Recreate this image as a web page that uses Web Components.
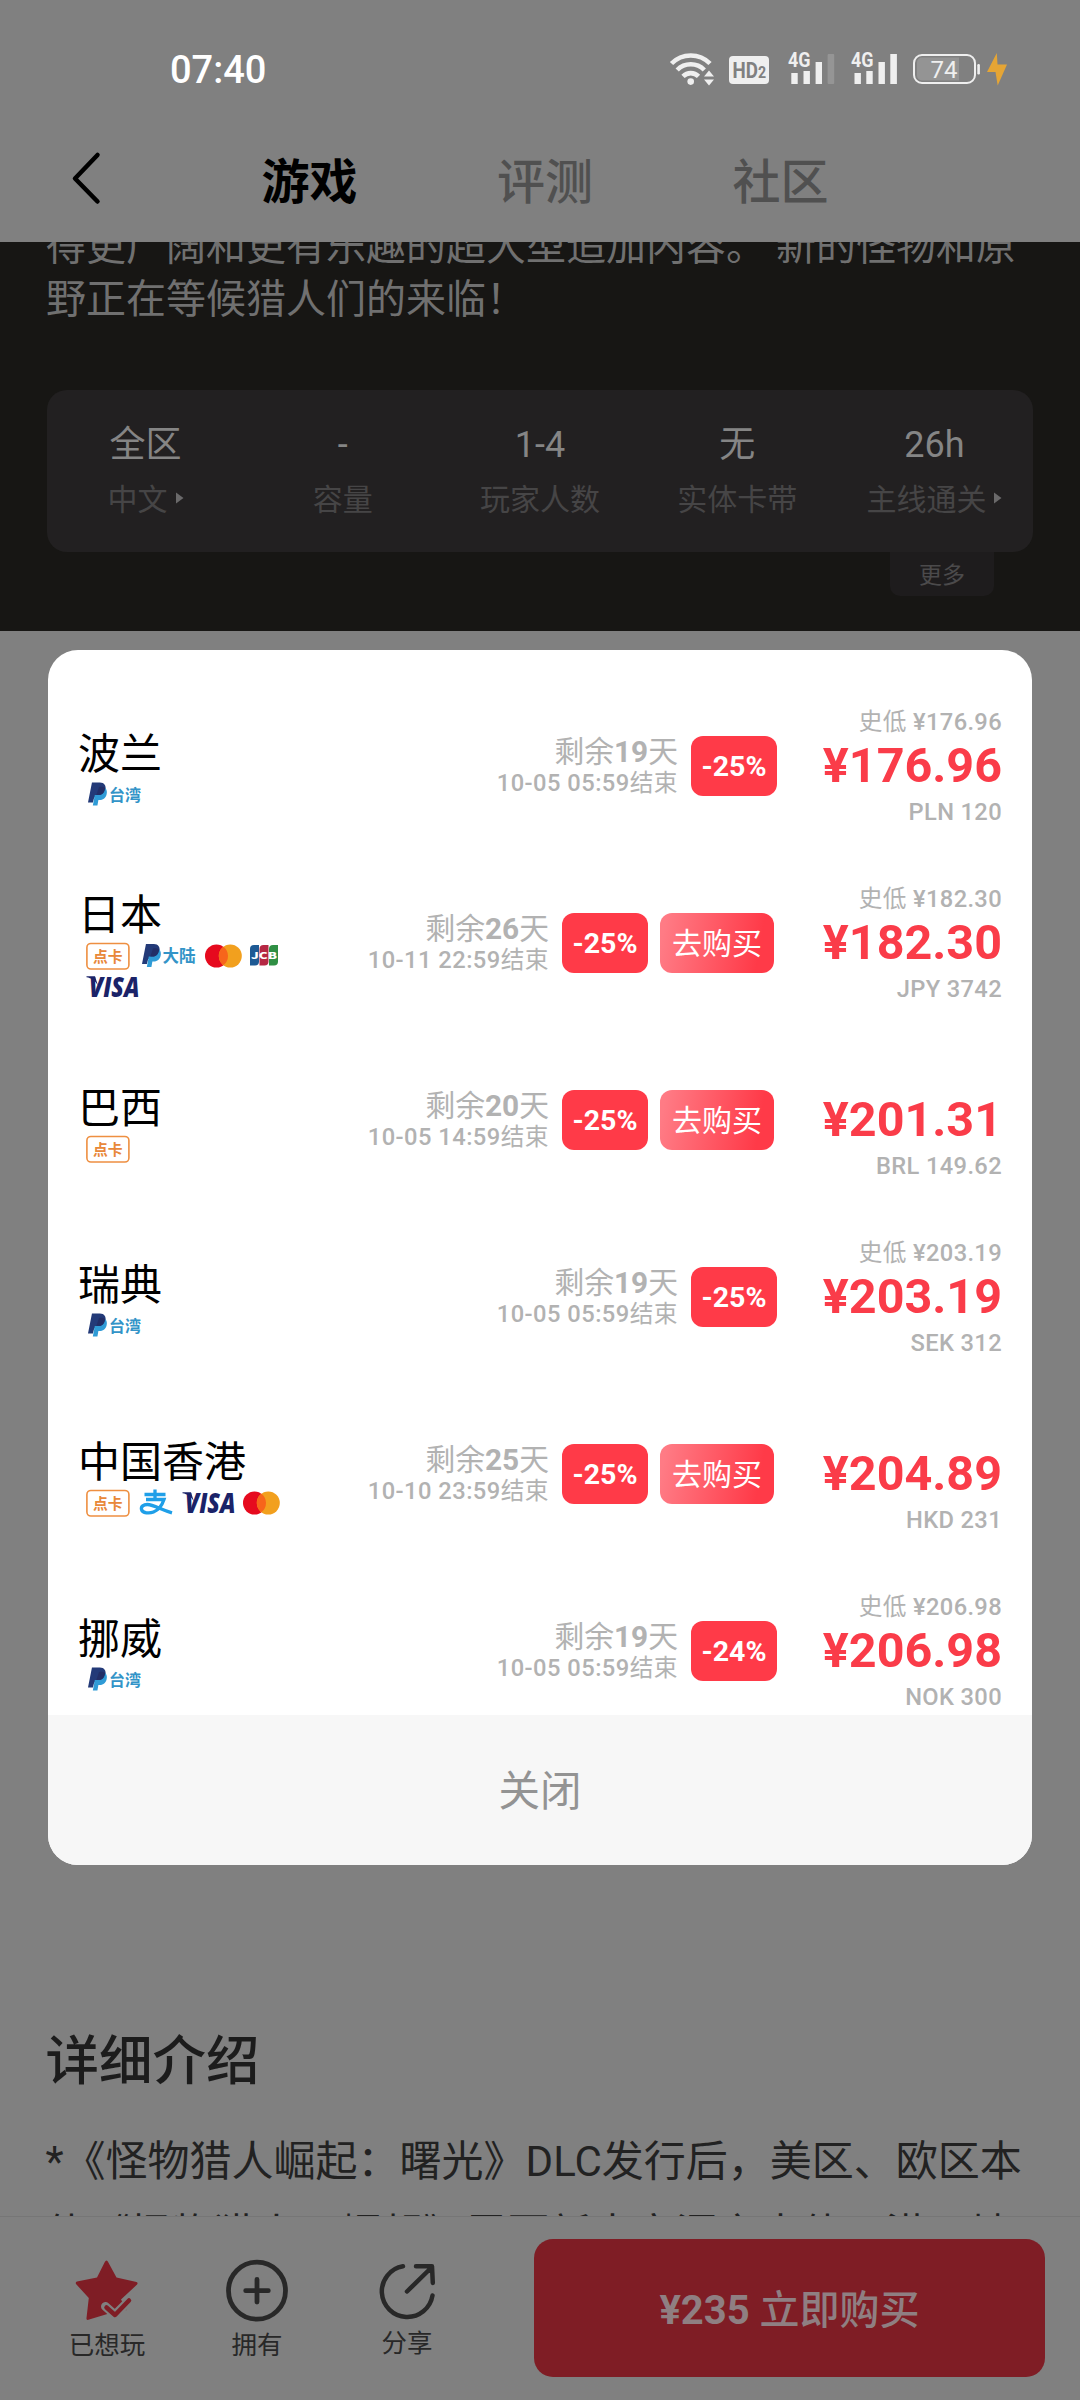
<!DOCTYPE html>
<html lang="zh-CN">
<head>
<meta charset="utf-8">
<title>游戏详情</title>
<style>
html,body{margin:0;padding:0}
body{width:1080px;height:2400px;overflow:hidden;background:#808080;font-family:Roboto,"Noto Sans CJK SC",sans-serif}
</style>
</head>
<body>
<game-page></game-page>
<script>
const define = (name, html) => customElements.define(name, class extends HTMLElement {
  constructor() {
    super();
    this.attachShadow({ mode: 'open' }).innerHTML = typeof html === 'function' ? html(this) : html;
  }
});

define('status-bar', `
<style>
:host{display:flex;height:140px;align-items:flex-start;justify-content:space-between;box-sizing:border-box;padding:44px 69px 0 170px}
.time{font-size:38px;line-height:44px;font-weight:500;color:#fff;margin-top:4px}
svg{display:block}
text{font-family:Roboto,sans-serif}
</style>
<div class="time">07:40</div>
<svg width="342" height="46" viewBox="669 44 342 46">
  <g fill="none" stroke="#efefef" stroke-width="4.600">
    <path d="M671.500 63.500A27 27 0 0 1 710 63.500"/>
    <path d="M677.200 70A19 19 0 0 1 704.300 70"/>
    <path d="M683 76.300A11 11 0 0 1 698.500 76.300"/>
  </g>
  <circle cx="690.700" cy="81.600" r="3.300" fill="#efefef"/>
  <path d="M709 70.500l5 6h-10zM709 85.500l5-6h-10z" fill="#efefef"/>
  <rect x="729" y="56" width="40" height="28" rx="4" fill="#efefef"/>
  <text x="732.500" y="78" font-size="22.500" font-weight="700" fill="#808080" textLength="33.500" lengthAdjust="spacingAndGlyphs">HD<tspan font-size="17">2</tspan></text>
  <path d="M791.300 73h6.400v11h-6.400zM803.500 71h6.400v13h-6.400zM815.600 62h6.400v22h-6.400z" fill="#efefef"/>
  <rect x="827.600" y="54" width="6.600" height="30" rx="1" fill="#959595"/>
  <text x="788" y="67" font-size="20.500" font-weight="700" fill="#efefef" textLength="22.500" lengthAdjust="spacingAndGlyphs">4G</text>
  <path d="M854.500 73h6.400v11h-6.400zM866.300 71h6.400v13h-6.400zM878.500 62h6.400v22h-6.400zM890.300 54h6.600v30h-6.600z" fill="#efefef"/>
  <text x="851" y="67" font-size="20.500" font-weight="700" fill="#efefef" textLength="22.500" lengthAdjust="spacingAndGlyphs">4G</text>
  <path d="M922 57.500h37v23h-37a5 5 0 0 1-5-5v-13a5 5 0 0 1 5-5z" fill="#949494"/>
  <rect x="914" y="55" width="61" height="28" rx="8" fill="none" stroke="#efefef" stroke-width="2"/>
  <rect x="977.300" y="64" width="2.600" height="10.500" rx="1.200" fill="#efefef"/>
  <text x="930.500" y="78" font-size="24.500" fill="#efefef" textLength="27" lengthAdjust="spacingAndGlyphs">74</text>
  <path d="M996.800 53L987 72h8.500l2.200 13.500L1007 64.500h-9.500z" fill="#e5a535"/>
</svg>`);

define('nav-tabs', `
<style>
:host{display:flex;height:102px;align-items:flex-start;box-sizing:border-box;padding-left:69px}
svg{margin-top:11px;display:block;flex:none}
.tabs{display:flex;margin-left:160.500px;margin-top:8px;gap:139.500px;font-size:48px;line-height:70px;color:#505050}
.tabs span{width:96px;font-weight:500;white-space:nowrap}
.tabs .on{color:#000;font-weight:700}
</style>
<svg width="32" height="56" viewBox="0 0 32 56"><path d="M28.500 4L6 27.500L28.500 50.500" fill="none" stroke="#000" stroke-width="4.500" stroke-linecap="round" stroke-linejoin="round"/></svg>
<div class="tabs"><span class="on">游戏</span><span>评测</span><span>社区</span></div>`);

define('info-cell', `
<style>
:host{display:flex;flex:1;flex-direction:column;align-items:center;padding-top:32.500px;white-space:nowrap}
.v{font-size:36px;line-height:44px;color:#858585}
.l{font-size:30px;line-height:40px;color:#464546;margin-top:13px;display:flex;align-items:center;gap:7px}
svg{display:none;margin-top:-4px}
:host([more]) svg{display:block}
</style>
<div class="v"><slot name="v"></slot></div>
<div class="l"><slot></slot><svg width="9" height="14" viewBox="0 0 9 14"><path d="M1 1.500v11L8.500 7z" fill="#6a696a"/></svg></div>`);

define('game-info', `
<style>
:host{display:block;height:389px;background:#171614;overflow:hidden}
p{margin:-22px 46px 0;font-size:40px;line-height:53px;color:#707070;white-space:nowrap}
.card{display:flex;margin:64px 47px 0 47px;height:162px;background:#222021;border-radius:20px}
.more{margin:0 86px 0 auto;width:104px;height:44px;border-radius:0 0 10px 10px;background:#1e1c1d;color:#4b4a4b;font-size:23px;line-height:47px;text-align:center}
</style>
<p>得更广阔和更有乐趣的超大型追加内容。 新的怪物和原<br>野正在等候猎人们的来临！</p>
<div class="card">
<info-cell more><span slot="v">全区</span>中文</info-cell>
<info-cell><span slot="v">-</span>容量</info-cell>
<info-cell><span slot="v">1-4</span>玩家人数</info-cell>
<info-cell><span slot="v">无</span>实体卡带</info-cell>
<info-cell more><span slot="v">26h</span>主线通关</info-cell>
</div>
<div class="more">更多</div>`);

define('game-detail', `
<style>
:host{display:block;height:1585px;box-sizing:border-box;padding:1390.500px 0 0 45.500px;overflow:hidden;color:#1c1c1c;white-space:nowrap}
h2{margin:0;font-size:53.500px;line-height:80px;font-weight:500}
p{margin:23.500px 0 0;font-size:42px;line-height:73px;color:#222}
</style>
<h2>详细介绍</h2>
<p>*《怪物猎人崛起：曙光》DLC发行后，美区、欧区本<br>体《怪物猎人：崛起》需更新本空洞之本体，港日地</p>`);

define('bar-action', `
<style>
:host{display:flex;flex-direction:column;align-items:center;width:150px;font-size:25.500px;line-height:30px;color:#282828}
::slotted(svg){display:block;margin-bottom:6.500px}
</style><slot></slot>`);

define('action-bar', `
<style>
:host{display:flex;height:184px;box-sizing:border-box;border-top:1.500px solid #767676;background:#808080}
.acts{display:flex;width:534px;box-sizing:border-box;padding:40.500px 0 0 32px}
button{all:unset;box-sizing:border-box;margin-top:21.500px;width:511px;height:138px;border-radius:19px;background:#7f1d25;color:#8f7f82;text-align:center;font-size:40px;line-height:143px;font-weight:700}
b{font-weight:500}
</style>
<div class="acts">
<bar-action><svg width="66" height="66" viewBox="74 2258 66 66"><path d="M106.500 2260.500q1 0 1.600 1.500l8.400 15.500 20 4.500q1.800.9.600 2.500L121 2299.500 127 2310l-18 3.500-21.500 6.500q-1.300-.2-1-2l2.300-20L76 2284q-.8-1.800 1-2.400l20-4L104.800 2262q.7-1.500 1.700-1.500z" fill="#7f1d25"/><path d="M105.500 2306.500l9.500 8.500 14.500-14.500" fill="none" stroke="#808080" stroke-width="9" stroke-linecap="round" stroke-linejoin="round"/><path d="M106.500 2307.500l8.500 7.500 14-14.500" fill="none" stroke="#7f1d25" stroke-width="4.500" stroke-linecap="round" stroke-linejoin="round"/></svg>已想玩</bar-action>
<bar-action><svg width="66" height="66" viewBox="224 2258 66 66"><g fill="none" stroke="#282828" stroke-width="4.800" stroke-linecap="round"><circle cx="257" cy="2290.700" r="28.500"/><path d="M257 2279.500v22.500M245.700 2290.700h22.600"/></g></svg>拥有</bar-action>
<bar-action><svg width="66" height="64" viewBox="374.500 2258 66 64"><g fill="none" stroke="#282828" stroke-width="4.500" stroke-linecap="round" stroke-linejoin="round"><path d="M403.500 2266.300A25.500 25.500 0 1 0 433 2295.500M416.500 2266.300H432.500L433.300 2283M432 2267.500L407.500 2291.500"/></g></svg>分享</bar-action>
</div>
<button>¥235 <b>立即购买</b></button>`);

const pp = `<path d="M4.500 0h9c5 0 7.500 3 6.300 8-1 5-4.500 7-9.300 7H7L5.600 20H0z" fill="#233a78"/><path d="M19.500 5.500c2 1.500 2.400 4 1.600 6.500-1.200 4-4.300 5.500-8 5.500h-1.300L10.700 23H5.500L7.700 12.500h4.500c4 0 6.500-2.500 7.300-7z" fill="#2f9bd6"/><path d="M12.500 4.500c2.500-.5 5.700 0 7 1-.8 4.500-3.300 7-7.300 7H9.500z" fill="#222e66"/>`;
const PAY = {
  card: ['44','31','10', `<rect x=".900" y="2.500" width="42" height="25.500" rx="4" fill="none" stroke="#ee8f41" stroke-width="1.600"/><text x="7" y="21" font-size="14.800" font-weight="700" fill="#e8883a">点卡</text>`],
  paypaltw: ['56','31','8', `<g transform="translate(2 2.500) scale(.88 1)">${pp}</g><text x="23" y="21.300" font-size="16" font-weight="700" fill="#3394c8">台湾</text>`],
  paypalcn: ['57','31','8', `<g transform="translate(2 3) scale(.88 1)">${pp}</g><text x="22.500" y="21" font-size="16.500" font-weight="700" fill="#3394c8">大陆</text>`],
  mc: ['37','31','8', `<circle cx="11.500" cy="15" r="11.500" fill="#e60a1e"/><circle cx="25.300" cy="15" r="11.500" fill="#f2a01e"/><path d="M18.400 5.800a11.500 11.500 0 0 1 0 18.400a11.500 11.500 0 0 1 0-18.400z" fill="#f7651b"/>`],
  jcb: ['28','31','8', `<path d="M4 4h5V20.500q0 4-4 4H0V8q0-4 4-4z" fill="#1d5a94"/><path d="M13.500 4h5V20.500q0 4-4 4h-5V8q0-4 4-4z" fill="#b52743"/><path d="M23 4h5V20.500q0 4-4 4h-5V8q0-4 4-4z" fill="#2f8f44"/><text x="1" y="17.500" font-size="9" font-weight="900" fill="#fff" textLength="26" lengthAdjust="spacingAndGlyphs">JCB</text>`],
  visa: ['53','31','8', `<path d="M.500 4.300h8.500l3 9.500C9.500 8.500 5 6 .500 5.300z" fill="#1b2368"/><text x="3" y="25" style="font-family:'Open Sans'" font-size="29" font-weight="800" font-style="italic" fill="#1b2368" textLength="50.500" lengthAdjust="spacingAndGlyphs">VISA</text>`],
  alipay: ['33','31','9', `<g fill="none" stroke="#1f9fe8" stroke-width="3.300"><path d="M15 1.500v9M4.500 6.500h21M6 11.500h18c-2 6-5.500 10.500-10.500 12.500-4 1.600-11 1.300-12-2.500-.7-3 2-5 5.800-5 6.500 0 13.500 5.100 24.700 8.300"/></g>`]
};

define('pay-icon', el => {
  const [w, h, gap, art] = PAY[el.getAttribute('kind')];
  return `<style>:host{display:block;margin-right:${gap}px}svg{display:block;overflow:visible}text{font-family:"Noto Sans CJK SC",sans-serif}</style><svg width="${w}" height="${h}" viewBox="0 0 ${w} ${h}">${art}</svg>`;
});

define('price-row', el => {
  const a = n => el.getAttribute(n);
  const buy = a('buy') !== null;
  return `
<style>
:host{display:flex;height:177px;align-items:center;padding:0 30px;white-space:nowrap}
.c{width:222px;margin-top:2.500px}
.name{font-size:42px;line-height:61px;height:56px;font-weight:400;color:#000}
.pay{display:flex;flex-wrap:wrap;padding-left:8px;box-sizing:border-box;width:222px}
.deal{display:flex;align-items:center;flex:1;justify-content:flex-end;margin-right:${buy ? 3 : 0}px}
.t{text-align:right;color:#b2b2b2;font-weight:500;margin-right:13px}
.t1{font-size:29.800px;line-height:34px;margin-top:-1px}
.t2{font-size:23.700px;line-height:28px;letter-spacing:.46px}
.t1 b{font-weight:700}
i{font-style:normal;font-weight:400}
.off{width:86px;height:60px;border-radius:12px;background:#ff3a48;color:#fff;font-size:28.500px;line-height:61px;font-weight:700;text-align:center}
.buy{width:114px;height:60px;border-radius:12px;background:linear-gradient(100deg,#ff7b85 5%,#ff3a48 85%);color:#fff;font-size:30px;line-height:61px;text-align:center;margin-left:12px}
.p{width:225px;text-align:right;color:#b2b2b2;font-size:23.700px;font-weight:500;padding-top:2px}
.low{line-height:28px;height:28px;letter-spacing:.35px}
.rmb{font-size:48.500px;line-height:60px;font-weight:700;color:#fa3c49}
.cur{line-height:28px;height:28px;margin-top:2px;letter-spacing:.35px}
</style>
<div class="c"><div class="name">${a('name')}</div><div class="pay">${a('pay').split(' ').map(k => `<pay-icon kind="${k}"></pay-icon>`).join('')}</div></div>
<div class="deal"><div class="t"><div class="t1"><i>剩余</i><b>${a('days')}</b><i>天</i></div><div class="t2">${a('end')}<i>结束</i></div></div>
<div class="off">${a('off')}</div>${buy ? '<div class="buy">去购买</div>' : ''}</div>
<div class="p"><div class="low">${a('low') !== null ? `<i>史低</i> ${a('price')}` : ''}</div><div class="rmb">${a('price')}</div><div class="cur">${a('cur')}</div></div>`;
});

define('price-dialog', `
<style>
:host{position:absolute;left:48px;top:650px;width:984px;height:1215px;border-radius:30px;overflow:hidden;background:#fff;display:flex;flex-direction:column}
.list{flex:none;height:1065px;overflow:hidden;box-sizing:border-box;padding-top:27.500px}
.close{flex:1;background:#f7f7f7;color:#939393;font-size:41.500px;line-height:154px;text-align:center;overflow:hidden}
</style>
<div class="list">
<price-row name="波兰" pay="paypaltw" days="19" end="10-05 05:59" off="-25%" low price="¥176.96" cur="PLN 120"></price-row>
<price-row name="日本" pay="card paypalcn mc jcb visa" days="26" end="10-11 22:59" off="-25%" buy low price="¥182.30" cur="JPY 3742"></price-row>
<price-row name="巴西" pay="card" days="20" end="10-05 14:59" off="-25%" buy price="¥201.31" cur="BRL 149.62"></price-row>
<price-row name="瑞典" pay="paypaltw" days="19" end="10-05 05:59" off="-25%" low price="¥203.19" cur="SEK 312"></price-row>
<price-row name="中国香港" pay="card alipay visa mc" days="25" end="10-10 23:59" off="-25%" buy price="¥204.89" cur="HKD 231"></price-row>
<price-row name="挪威" pay="paypaltw" days="19" end="10-05 05:59" off="-24%" low price="¥206.98" cur="NOK 300"></price-row>
</div>
<div class="close">关闭</div>`);

define('game-page', `
<style>:host{display:flex;flex-direction:column;width:1080px;height:2400px;position:relative;overflow:hidden}</style>
<status-bar></status-bar><nav-tabs></nav-tabs><game-info></game-info><game-detail></game-detail><action-bar></action-bar>
<price-dialog></price-dialog>`);
</script>
</body>
</html>
